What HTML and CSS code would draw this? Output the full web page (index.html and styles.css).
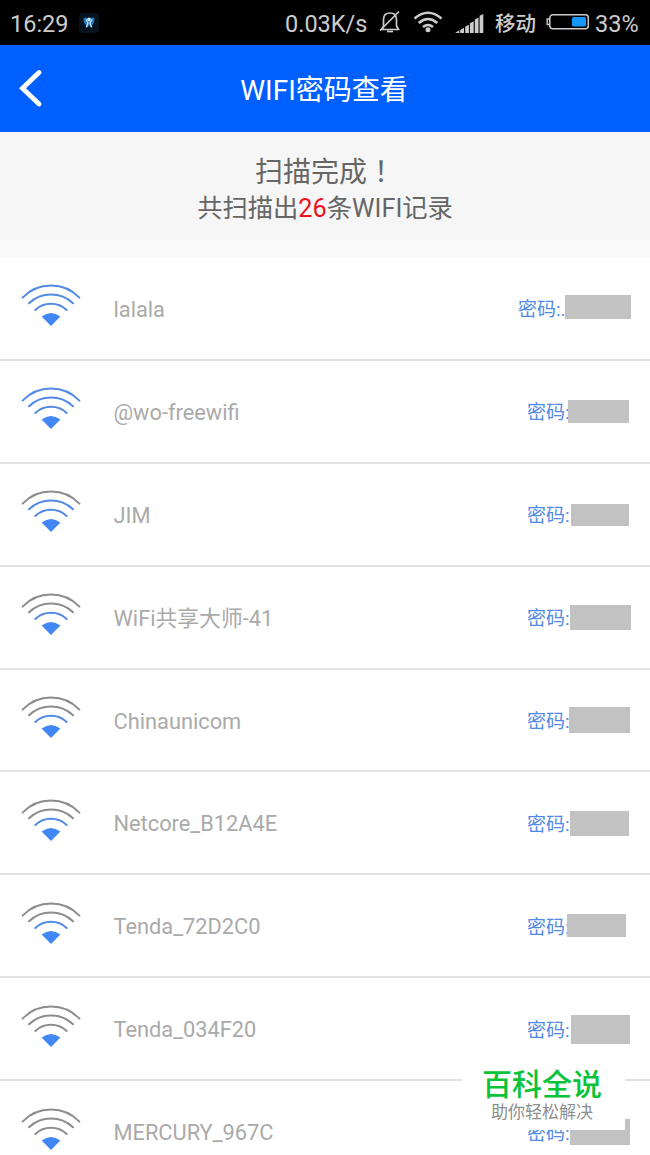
FILE: index.html
```html
<!DOCTYPE html>
<html lang="zh-CN">
<head>
<meta charset="utf-8">
<title>WIFI密码查看</title>
<link rel="stylesheet" href="styles.css">
</head>
<body>
<svg class="defs" aria-hidden="true">
  <symbol id="signal" viewBox="0 0 62 46">
    <path class="arc outer" d="M2.6 16.6A39.6 39.6 0 0 1 59.4 16.6"/>
    <path class="arc middle" d="M9 22.3A32 32 0 0 1 53 22.3"/>
    <path class="arc inner" d="M15.3 29A23 23 0 0 1 46.7 29"/>
    <path class="core" d="M21.6 35.600Q31 28.400 40.400 35.600L31 45Z"/>
  </symbol>
</svg>
<header class="status">
  <span class="clock">16:29</span>
  <svg class="app" width="22" height="22" viewBox="0 0 22 22"><rect x="1" y="1" width="20" height="20" rx="4" fill="#06131f"/><path d="M5.5 6.5Q7.5 5 9 6Q11 4.500 13 6Q15 5 16.500 6.500Q16.500 11 14 13L14.500 15.500H12.500L11 13L9.500 15.500H7.500L8 13Q5.500 11 5.500 6.500Z" fill="#2879b8"/><path d="M8 7.500L10 11L8.500 15M14 7.500L12 11L13.500 15" stroke="#b8e3ff" stroke-width="1.300" fill="none"/><circle cx="11" cy="7.500" r="1.700" fill="#d9f1ff"/></svg>
  <span class="speed">0.03K/s</span>
  <svg class="bell" width="22" height="24" viewBox="0 0 22 24" fill="none" stroke="#ccc" stroke-width="1.700"><path d="M3 19.500H19.500L17.500 16V9.500Q17.500 3 11 3Q4.500 3 4.500 9.500V16.500Z"/><path d="M8 21.500H14"/><path d="M1 20.500L20 1.500"/></svg>
  <svg class="net" width="30" height="22" viewBox="0 0 30 22" fill="none" stroke="#ccc" stroke-width="2.600"><path d="M1.500 7.500Q15 -4 28.500 7.500"/><path d="M5.700 12Q15 4 24.300 12"/><path d="M10 16Q15 12 20 16"/><circle cx="15" cy="18.800" r="2.500" fill="#ccc" stroke="none"/></svg>
  <svg class="bars" width="29" height="20" viewBox="0 0 29 20" fill="#ccc"><path d="M0 19L4.300 16.200V19ZM5.200 16L9 13.800V19H5.200ZM10.200 12.700L13.900 10.800V19H10.200ZM14.900 9.200L18.700 7.300V19H14.900ZM19.800 5.500L23.500 3.600V19H19.800ZM24.600 1.800L28.300 0V19H24.600Z"/></svg>
  <span class="carrier">移动</span>
  <svg class="battery" width="44" height="18" viewBox="0 0 44 18"><rect x="3.800" y="1.800" width="38.500" height="14" rx="3" fill="none" stroke="#ccc" stroke-width="1.500"/><path d="M3.500 6H1.200V11.500H3.500" fill="none" stroke="#ccc" stroke-width="1.400"/><rect x="26" y="4" width="14" height="9.600" rx="1.500" fill="#1597fb"/></svg>
  <span class="percent">33%</span>
</header>
<nav class="titlebar">
  <svg class="back" width="24" height="38" viewBox="0 0 24 38"><path d="M20 3.500L3.500 19.300L20 35" fill="none" stroke="#fff" stroke-width="4.800" stroke-linecap="round" stroke-linejoin="miter"/></svg>
  <h1 class="title">WIFI密码查看</h1>
</nav>
<section class="summary">
  <p class="done">扫描完成<span class="bang" lang="zh-TW">！</span></p>
  <p class="count">共扫描出<b class="num">26</b>条WIFI记录</p>
</section>
<main class="list">
  <div class="row s4"><svg class="signal"><use href="#signal"/></svg><span class="name">lalala</span><span class="pass wide">密码:.</span><i class="mask m1"></i></div>
  <div class="row s4"><svg class="signal"><use href="#signal"/></svg><span class="name">@wo-freewifi</span><span class="pass">密码:</span><i class="mask m2"></i></div>
  <div class="row s3"><svg class="signal"><use href="#signal"/></svg><span class="name">JIM</span><span class="pass">密码:</span><i class="mask m3"></i></div>
  <div class="row s2"><svg class="signal"><use href="#signal"/></svg><span class="name">WiFi共享大师-41</span><span class="pass">密码:</span><i class="mask m4"></i></div>
  <div class="row s2"><svg class="signal"><use href="#signal"/></svg><span class="name">Chinaunicom</span><span class="pass">密码:</span><i class="mask m5"></i></div>
  <div class="row s2"><svg class="signal"><use href="#signal"/></svg><span class="name">Netcore_B12A4E</span><span class="pass">密码:</span><i class="mask m6"></i></div>
  <div class="row s2"><svg class="signal"><use href="#signal"/></svg><span class="name">Tenda_72D2C0</span><span class="pass">密码:</span><i class="mask m7"></i></div>
  <div class="row s1"><svg class="signal"><use href="#signal"/></svg><span class="name">Tenda_034F20</span><span class="pass">密码:</span><i class="mask m8"></i></div>
  <div class="row s1"><svg class="signal"><use href="#signal"/></svg><span class="name">MERCURY_967C</span><span class="pass">密码:</span><i class="mask m9"></i></div>
</main>
<aside class="badge">
  <strong class="brand">百科全说</strong>
  <span class="slogan">助你轻松解决</span>
</aside>
</body>
</html>
```
FILE: styles.css
```css
* { box-sizing: border-box; }
body {
  margin: 0;
  width: 650px;
  height: 1155px;
  overflow: hidden;
  position: relative;
  background: #fafafa;
  font-family: Roboto, "Noto Sans CJK SC", sans-serif;
}
.defs { display: none; }

.status {
  height: 45px;
  background: #000;
  color: #ccc;
  display: flex;
  align-items: center;
  padding: 2px 0 0 10px;
  white-space: nowrap;
  line-height: 30px;
}
.status svg { flex: none; }
.clock { width: 68px; font-size: 23.5px; }
.app { margin-top: -2px; }
.speed { margin-left: 185px; width: 94px; font-size: 23.5px; }
.bell { margin-top: -4px; }
.net { margin-left: 12px; margin-top: -3px; }
.bars { margin-left: 12px; }
.carrier { margin-left: 11px; width: 43px; font-size: 20.5px; font-weight: 500; }
.battery { margin-left: 8px; margin-top: -3px; }
.percent { margin-left: 5px; font-size: 23.5px; }

.titlebar {
  height: 87px;
  background: #0060ff;
  color: #fff;
  display: grid;
  grid-template-columns: 60px 1fr 60px;
  align-items: center;
}
.back { margin-left: 19px; margin-top: -1px; }
.title {
  margin: 5px 2px 0 0;
  text-align: center;
  font-size: 28px;
  line-height: 40px;
  font-weight: 400;
}

.summary {
  height: 108px;
  margin-bottom: 18px;
  padding-top: 20px;
  background: #f6f6f6;
  color: #666;
  text-align: center;
}
.summary p { margin: 0; line-height: 36px; }
.done { font-size: 28px; }
.bang { font-family: "Noto Sans CJK TC", sans-serif; }
.count { font-size: 25.3px; }
.num { color: #ee101c; font-weight: 400; }

.list { background: #fff; }
.row {
  position: relative;
  height: 102.9px;
  border-bottom: 2px solid #e2e2e2;
  display: flex;
  align-items: center;
  padding-left: 20px;
}
.signal { flex: none; width: 62px; height: 46px; margin-top: -8px; margin-left: -0.5px; }
.arc { fill: none; stroke-width: 2; stroke-linecap: round; }
.core { fill: #4288f5; }
.outer { stroke: var(--outer); }
.middle { stroke: var(--middle); }
.inner { stroke: var(--inner); }
.s4 { --outer: #5289e4; --middle: #5289e4; --inner: #5289e4; }
.s3 { --outer: #8c8c8c; --middle: #5289e4; --inner: #5289e4; }
.s2 { --outer: #8c8c8c; --middle: #8c8c8c; --inner: #5289e4; }
.s1 { --outer: #8c8c8c; --middle: #8c8c8c; --inner: #8c8c8c; }
.name { flex: 1; margin-left: 32px; padding-top: 3px; font-size: 21.8px; line-height: 30px; color: #aaa; }
.pass { width: 123px; padding-top: 4px; font-size: 19px; line-height: 28px; color: #4f8ae6; }
.wide { width: 132px; }

/* Grey blocks laid over each password */
.mask { position: absolute; background: #c2c2c2; }
.m1 { left: 565px; top: 37px; width: 66px; height: 24px; }
.m2 { left: 568px; top: 39px; width: 61px; height: 23px; }
.m3 { left: 571px; top: 40px; width: 58px; height: 22px; }
.m4 { left: 570px; top: 38px; width: 61px; height: 25px; }
.m5 { left: 569px; top: 37px; width: 61px; height: 26px; }
.m6 { left: 570px; top: 39px; width: 59px; height: 25px; }
.m7 { left: 567px; top: 39px; width: 59px; height: 23px; }
.m8 { left: 571px; top: 37px; width: 59px; height: 29px; }
.m9 { left: 570px; top: 38px; width: 60px; height: 26px; }

.badge {
  position: absolute;
  left: 462px;
  top: 1062px;
  width: 163px;
  height: 68px;
  background: #fff;
  display: flex;
  flex-direction: column;
  align-items: center;
}
.brand { padding: 4px 3px 0 0; font-size: 30px; line-height: 38px; font-weight: 500; color: #09c338; }
.slogan { font-size: 17px; line-height: 17px; color: #8e8e8e; padding-right: 3px; }
```
